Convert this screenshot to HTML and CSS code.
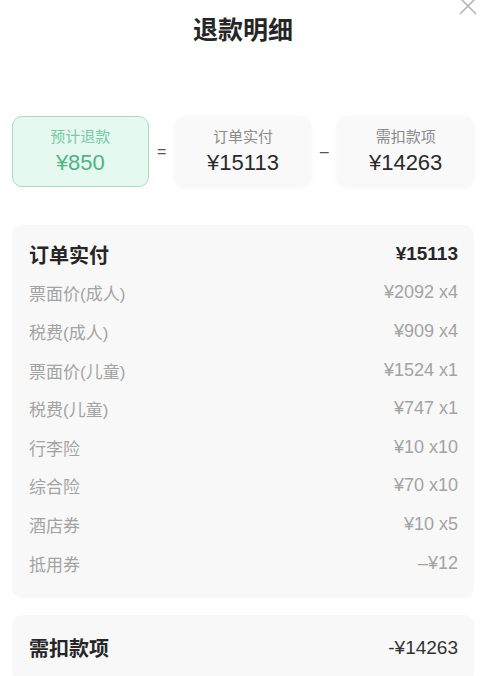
FILE: index.html
```html
<!DOCTYPE html>
<html lang="zh-CN">
<head>
    <meta charset="UTF-8">
    <meta name="viewport" content="width=device-width, initial-scale=1.0">
    <title>退款明细</title>
    <link rel="stylesheet" href="styles.css">
</head>
<body>
    <div class="sheet">
        <h1 class="title">退款明细</h1>
        <button class="close" aria-label="关闭">
            <svg width="18" height="18" viewBox="0 0 18 18">
                <path d="M1 1 L17 17 M17 1 L1 17" stroke="#b5b5b5" stroke-width="1.6" fill="none"/>
            </svg>
        </button>

        <div class="summary">
            <div class="box box-refund">
                <div class="box-label">预计退款</div>
                <div class="box-amount">¥850</div>
            </div>
            <div class="op">=</div>
            <div class="box">
                <div class="box-label">订单实付</div>
                <div class="box-amount">¥15113</div>
            </div>
            <div class="op">–</div>
            <div class="box">
                <div class="box-label">需扣款项</div>
                <div class="box-amount">¥14263</div>
            </div>
        </div>

        <div class="panel">
            <div class="row row-head">
                <span>订单实付</span>
                <span>¥15113</span>
            </div>
            <div class="row"><span>票面价(成人)</span><span>¥2092 x4</span></div>
            <div class="row"><span>税费(成人)</span><span>¥909 x4</span></div>
            <div class="row"><span>票面价(儿童)</span><span>¥1524 x1</span></div>
            <div class="row"><span>税费(儿童)</span><span>¥747 x1</span></div>
            <div class="row"><span>行李险</span><span>¥10 x10</span></div>
            <div class="row"><span>综合险</span><span>¥70 x10</span></div>
            <div class="row"><span>酒店券</span><span>¥10 x5</span></div>
            <div class="row"><span>抵用券</span><span>–¥12</span></div>
        </div>

        <div class="panel panel-deduct">
            <div class="row row-head">
                <span>需扣款项</span>
                <span>-¥14263</span>
            </div>
        </div>
    </div>
</body>
</html>
```

FILE: styles.css
```css
body {
    font-family: "Liberation Sans", "Noto Sans CJK SC", sans-serif;
    background-color: #fff;
    margin: 0;
    color: #222;
}
.sheet {
    position: relative;
    padding: 0 16px 0 12px;
}
.title {
    margin: 0;
    padding-top: 13px;
    height: 34px;
    line-height: 34px;
    text-align: center;
    font-size: 25px;
    font-weight: 700;
    color: #262626;
}
.close {
    position: absolute;
    top: -3px;
    right: 13px;
    padding: 0;
    border: none;
    background: none;
}
.summary {
    margin-top: 69px;
    display: flex;
    align-items: center;
}
.box {
    width: 137px;
    height: 71px;
    box-sizing: border-box;
    border-radius: 10px;
    background-color: #f9f9f9;
    box-shadow: 0 1px 4px rgba(0, 0, 0, 0.04);
    display: flex;
    flex-direction: column;
    align-items: center;
    justify-content: center;
}
.box-refund {
    background-color: #e6f9f1;
    border: 1px solid #a9dcc5;
    box-shadow: none;
}
.box-label {
    font-size: 15px;
    line-height: 20px;
    color: #8a8a8a;
}
.box-amount {
    font-size: 22px;
    line-height: 28px;
    color: #2a2a2a;
    margin-top: 2px;
}
.box-refund .box-label {
    color: #78c9a3;
}
.box-refund .box-amount {
    color: #4eb482;
}
.op {
    width: 26px;
    text-align: center;
    font-size: 16px;
    color: #555;
}
.panel {
    margin-top: 38px;
    padding: 10px 16px 16px 17px;
    background-color: #f8f8f8;
    border-radius: 10px;
}
.panel-deduct {
    margin-top: 17px;
    padding-top: 13px;
}
.row {
    display: flex;
    justify-content: space-between;
    align-items: center;
    height: 38.6px;
    font-size: 17px;
    color: #a3a3a3;
}
.row span:last-child {
    font-size: 18px;
}
.row-head {
    font-size: 20px;
    font-weight: 700;
    color: #262626;
}
.row-head span:last-child {
    font-weight: 700;
    font-size: 19px;
}
.panel-deduct .row-head span:last-child {
    font-weight: 400;
    color: #333;
}
```
